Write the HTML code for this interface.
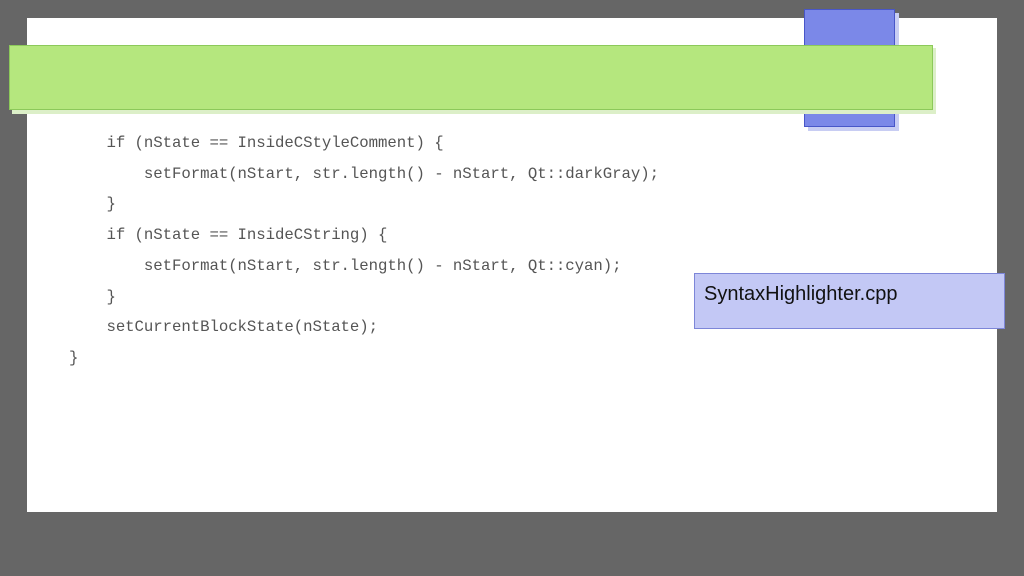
<!DOCTYPE html>
<html><head><style>
html,body{margin:0;padding:0}
body{width:1024px;height:576px;background:#666666;position:relative;overflow:hidden}
.page{position:absolute;left:27px;top:18px;width:970px;height:494px;background:#fff}
.blueS{position:absolute;left:808px;top:13px;width:91px;height:118px;background:#c8cdf3}
.blue{position:absolute;left:804px;top:9px;width:89px;height:116px;background:#7b88e8;border:1px solid #4856c8}
.greenS{position:absolute;left:12px;top:48px;width:924px;height:66px;background:#dcefc8}
.green{position:absolute;left:9px;top:45px;width:922px;height:63px;background:#b5e77e;border:1px solid #8cc95a}
.code{position:absolute;left:69px;top:128px;font-family:"Liberation Mono",monospace;font-size:15.7px;line-height:30.7px;color:#555;white-space:pre;margin:0;letter-spacing:-0.05px}
.note{position:absolute;left:694px;top:273px;width:309px;height:54px;background:#c3c8f5;border:1px solid #7d86d8;font-family:"Liberation Sans",sans-serif;font-size:20px;color:#111}
.note span{position:absolute;left:9px;top:9px}
</style></head><body>
<div class="page"></div>
<div class="blueS"></div>
<div class="blue"></div>
<div class="greenS"></div>
<div class="green"></div>
<pre class="code">    if (nState == InsideCStyleComment) {
        setFormat(nStart, str.length() - nStart, Qt::darkGray);
    }
    if (nState == InsideCString) {
        setFormat(nStart, str.length() - nStart, Qt::cyan);
    }
    setCurrentBlockState(nState);
}</pre>
<div class="note"><span>SyntaxHighlighter.cpp</span></div>
</body></html>
